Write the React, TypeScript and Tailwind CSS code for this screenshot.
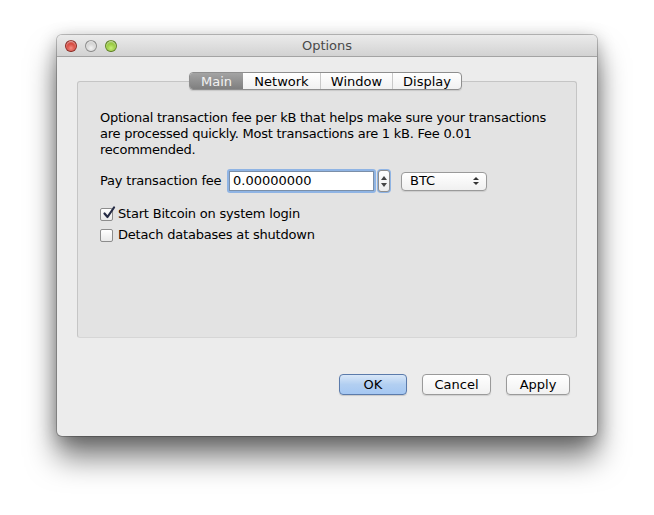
import React from "react";

const font = { fontFamily: '"DejaVu Sans", "Open Sans", sans-serif' };

function Light({ color }: { color: string }) {
  return (
    <span
      className={`w-[12px] h-[12px] rounded-full border border-black/30 ${color} shadow-[inset_0_1px_2px_rgba(255,255,255,0.7)]`}
    />
  );
}

function Checkbox({ checked }: { checked?: boolean }) {
  return (
    <span className="relative w-[13px] h-[13px] rounded-[2px] border border-[#8c8c8c] bg-gradient-to-b from-white to-[#e9e9e9] shrink-0">
      {checked && (
        <svg viewBox="0 0 14 14" className="absolute -top-[3px] left-[1px] w-[14px] h-[14px]">
          <path d="M2.5 7.5 L5.5 11 L12 1.5" fill="none" stroke="#262c45" strokeWidth="2.2" strokeLinecap="round" strokeLinejoin="round" />
        </svg>
      )}
    </span>
  );
}

function Button({ label, primary, w }: { label: string; primary?: boolean; w: string }) {
  return (
    <button
      className={`${w} h-[21px] rounded-[4px] text-[13px] text-black ${
        primary
          ? "border border-[#5b7bab] bg-gradient-to-b from-[#d9e7f8] via-[#b2cff1] to-[#a5c7f2] shadow-[0_1px_1px_rgba(0,0,0,0.15)]"
          : "border border-[#9a9a9a] bg-gradient-to-b from-white to-[#f1f1f1] shadow-[0_1px_1px_rgba(0,0,0,0.12)]"
      }`}
    >
      {label}
    </button>
  );
}

export default function App() {
  const tabs = [
    { name: "Main", w: "w-[53px]" },
    { name: "Network", w: "w-[77px]" },
    { name: "Window", w: "w-[72px]" },
    { name: "Display", w: "w-[69px]" },
  ];

  return (
    <div className="w-[654px] h-[515px] bg-white pl-[57px] pt-[35px]" style={font}>
      <div className="w-[540px] h-[401px] flex flex-col rounded-[5px] bg-[#ececec] shadow-[0_22px_30px_rgba(0,0,0,0.5),0_4px_18px_rgba(0,0,0,0.3),0_0_0_1px_rgba(0,0,0,0.22)] overflow-hidden">
        {/* Title bar */}
        <div className="relative h-[22px] shrink-0 flex items-center bg-gradient-to-b from-[#ebebeb] to-[#d2d2d2] border-b border-[#a3a3a3]">
          <div className="flex items-center gap-[8px] pl-[8px]">
            <Light color="bg-[radial-gradient(circle_at_50%_70%,#f48d83,#d1382e_60%,#a8281f)]" />
            <Light color="bg-[radial-gradient(circle_at_50%_70%,#f4f4f4,#cfcfcf_60%,#a9a9a9)]" />
            <Light color="bg-[radial-gradient(circle_at_50%_70%,#c8ef7a,#8dc22f_60%,#5f9515)]" />
          </div>
          <span className="absolute inset-0 flex items-center justify-center text-[13px] text-[#4a4a4a]">Options</span>
        </div>

        {/* Content */}
        <div className="flex-1 flex flex-col px-[20px] pt-[15px]">
          <div className="relative z-10 flex justify-center">
            <div className="flex h-[18px] rounded-[4px] border border-[#8e8e8e] bg-gradient-to-b from-white to-[#f1f1f1] overflow-hidden shadow-[0_1px_1px_rgba(0,0,0,0.12)] mr-[3px]">
              {tabs.map((t, i) => (
                <div
                  key={t.name}
                  className={`${t.w} flex items-center justify-center text-[13px] leading-none ${
                    i === 0
                      ? "bg-gradient-to-b from-[#a4a4a4] to-[#7f7f7f] text-[#f2f2f2]"
                      : "text-black border-l border-[#c9c9c9]"
                  } ${i === 1 ? "border-l-0" : ""}`}
                >
                  {t.name}
                </div>
              ))}
            </div>
          </div>

          <div className="-mt-[9px] h-[257px] rounded-[3px] border border-[#c5c5c5] border-b-[#d6d6d6] bg-[#e3e3e3] pt-[28px] pl-[22px] text-[13px] text-black">
            <p className="leading-[16px] tracking-[-0.24px]">
              Optional transaction fee per kB that helps make sure your transactions
              <br />
              are processed quickly. Most transactions are 1 kB. Fee 0.01
              <br />
              recommended.
            </p>

            <div className="flex items-center mt-[11px] h-[24px]">
              <span className="w-[127px] tracking-[-0.2px]">Pay transaction fee</span>
              <div className="h-[24px] w-[149px] rounded-[3px] bg-[#8fb4e4] p-[2px]">
                <div className="h-full w-full border border-[#7b8fa8] bg-white flex items-center pl-[3px]">
                  0.00000000
                </div>
              </div>
              <div className="ml-[1px] h-[24px] w-[14px] rounded-[4px] bg-[#8fb4e4] p-[1px]">
                <div className="h-full w-full rounded-[3px] border border-[#8e8e8e] bg-gradient-to-b from-white to-[#ececec] flex flex-col items-center justify-center gap-[3px]">
                  <span className="w-0 h-0 border-l-[3px] border-r-[3px] border-b-[4px] border-l-transparent border-r-transparent border-b-[#444]" />
                  <span className="w-0 h-0 border-l-[3px] border-r-[3px] border-t-[4px] border-l-transparent border-r-transparent border-t-[#444]" />
                </div>
              </div>
              <div className="ml-[10px] h-[19px] w-[86px] rounded-[4px] border border-[#9a9a9a] bg-gradient-to-b from-white to-[#f0f0f0] flex items-center justify-between pl-[8px] pr-[7px] shadow-[0_1px_1px_rgba(0,0,0,0.1)]">
                <span>BTC</span>
                <span className="flex flex-col items-center gap-[2px]">
                  <span className="w-0 h-0 border-l-[3px] border-r-[3px] border-b-[3px] border-l-transparent border-r-transparent border-b-[#333]" />
                  <span className="w-0 h-0 border-l-[3px] border-r-[3px] border-t-[3px] border-l-transparent border-r-transparent border-t-[#333]" />
                </span>
              </div>
            </div>

            <div className="flex items-center gap-[5px] mt-[12px] h-[18px] tracking-[-0.2px]">
              <Checkbox checked />
              <span>Start Bitcoin on system login</span>
            </div>
            <div className="flex items-center gap-[5px] mt-[3px] h-[18px] tracking-[-0.2px]">
              <Checkbox />
              <span>Detach databases at shutdown</span>
            </div>
          </div>

          <div className="flex justify-end gap-[15px] mt-[36px] pr-[7px]">
            <Button label="OK" primary w="w-[68px]" />
            <Button label="Cancel" w="w-[69px]" />
            <Button label="Apply" w="w-[64px]" />
          </div>
        </div>
      </div>
    </div>
  );
}
